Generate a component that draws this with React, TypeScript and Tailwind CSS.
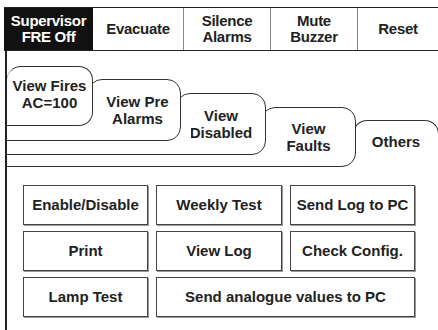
import React from 'react'

const topButtons = [
  { lines: ['Silence', 'Alarms'], width: 'w-[87px]' },
  { lines: ['Mute', 'Buzzer'], width: 'w-[87px]' },
]

const actions = [
  { label: 'Enable/Disable', span: 'col-span-1' },
  { label: 'Weekly Test', span: 'col-span-1' },
  { label: 'Send Log to PC', span: 'col-span-1' },
  { label: 'Print', span: 'col-span-1' },
  { label: 'View Log', span: 'col-span-1' },
  { label: 'Check Config.', span: 'col-span-1' },
  { label: 'Lamp Test', span: 'col-span-1' },
  { label: 'Send analogue values to PC', span: 'col-span-2' },
]

function TabLabel({ lines, className = '' }: { lines: string[]; className?: string }) {
  return (
    <div className={`flex h-full flex-col items-center justify-center text-[15px] font-bold leading-[17px] text-[#222] ${className}`}>
      {lines.map((l) => (
        <span key={l}>{l}</span>
      ))}
    </div>
  )
}

export default function App() {
  return (
    <div className="relative h-[330px] w-[438px] overflow-hidden bg-white font-['Liberation_Sans',Arial,sans-serif] text-[#1a1a1a]">
      {/* Top bar */}
      <div className="ml-[4px] mt-[7px] flex h-[44px] border-y border-[#222] text-[15px] font-bold leading-[16px] tracking-[-0.3px]">
        <div className="flex w-[89px] flex-col items-center justify-center bg-[#111] text-white">
          <span>Supervisor</span>
          <span>FRE Off</span>
        </div>
        <div className="flex w-[90px] items-center justify-center text-[#222]">Evacuate</div>
        {topButtons.map((b) => (
          <div
            key={b.lines[0]}
            className={`flex ${b.width} flex-col items-center justify-center border-l border-[#888] text-[#222]`}
          >
            {b.lines.map((l) => (
              <span key={l}>{l}</span>
            ))}
          </div>
        ))}
        <div className="flex flex-1 items-center justify-center border-l border-[#888] text-[#222]">Reset</div>
      </div>

      {/* Body with left frame */}
      <div className="ml-[5px] h-[279px] border-l-2 border-[#222]">
        {/* Stacked tabs */}
        <div className="relative h-[119px]">
          <div className="absolute left-0 top-[15px] z-[50] h-[60px] w-[86px] rounded-r-[14px] rounded-tl-[14px] border border-l-0 border-[#333] bg-white">
            <TabLabel lines={['View Fires', 'AC=100']} className="pb-[4px]" />
          </div>

          <div className="absolute left-0 top-[60px] z-[45] h-[30px] w-[97px] border-b border-[#333] bg-white" />
          <div className="absolute left-[81px] top-[28px] z-[40] h-[62px] w-[93px] rounded-[14px] border border-[#333] bg-white">
            <TabLabel lines={['View Pre', 'Alarms']} className="pl-[6px]" />
          </div>

          <div className="absolute left-0 top-[75px] z-[35] h-[29px] w-[184px] border-b border-[#333] bg-white" />
          <div className="absolute left-[169px] top-[42px] z-[30] h-[62px] w-[90px] rounded-[14px] border border-[#333] bg-white">
            <TabLabel lines={['View', 'Disabled']} />
          </div>

          <div className="absolute left-0 top-[90px] z-[25] h-[26px] w-[270px] border-b border-[#333] bg-white" />
          <div className="absolute left-[254px] top-[56px] z-[20] h-[60px] w-[95px] rounded-[14px] border border-[#333] bg-white">
            <TabLabel lines={['View', 'Faults']} />
          </div>

          <div className="absolute left-[346px] top-[69px] z-[10] h-[38px] w-[86px] rounded-t-[14px] border border-b-0 border-[#333] bg-white">
            <TabLabel lines={['Others']} className="pt-[4px]" />
          </div>
        </div>

        {/* Action buttons */}
        <div className="grid grid-cols-[125px_126px_125px] gap-x-[8px] gap-y-[6px] pl-[16px] pt-[15px]">
          {actions.map((a) => (
            <div
              key={a.label}
              className={`${a.span} flex h-[40px] items-center justify-center border border-[#444] text-[15px] font-bold text-[#222] shadow-[1px_1px_0_#999]`}
            >
              {a.label}
            </div>
          ))}
        </div>
      </div>
    </div>
  )
}
